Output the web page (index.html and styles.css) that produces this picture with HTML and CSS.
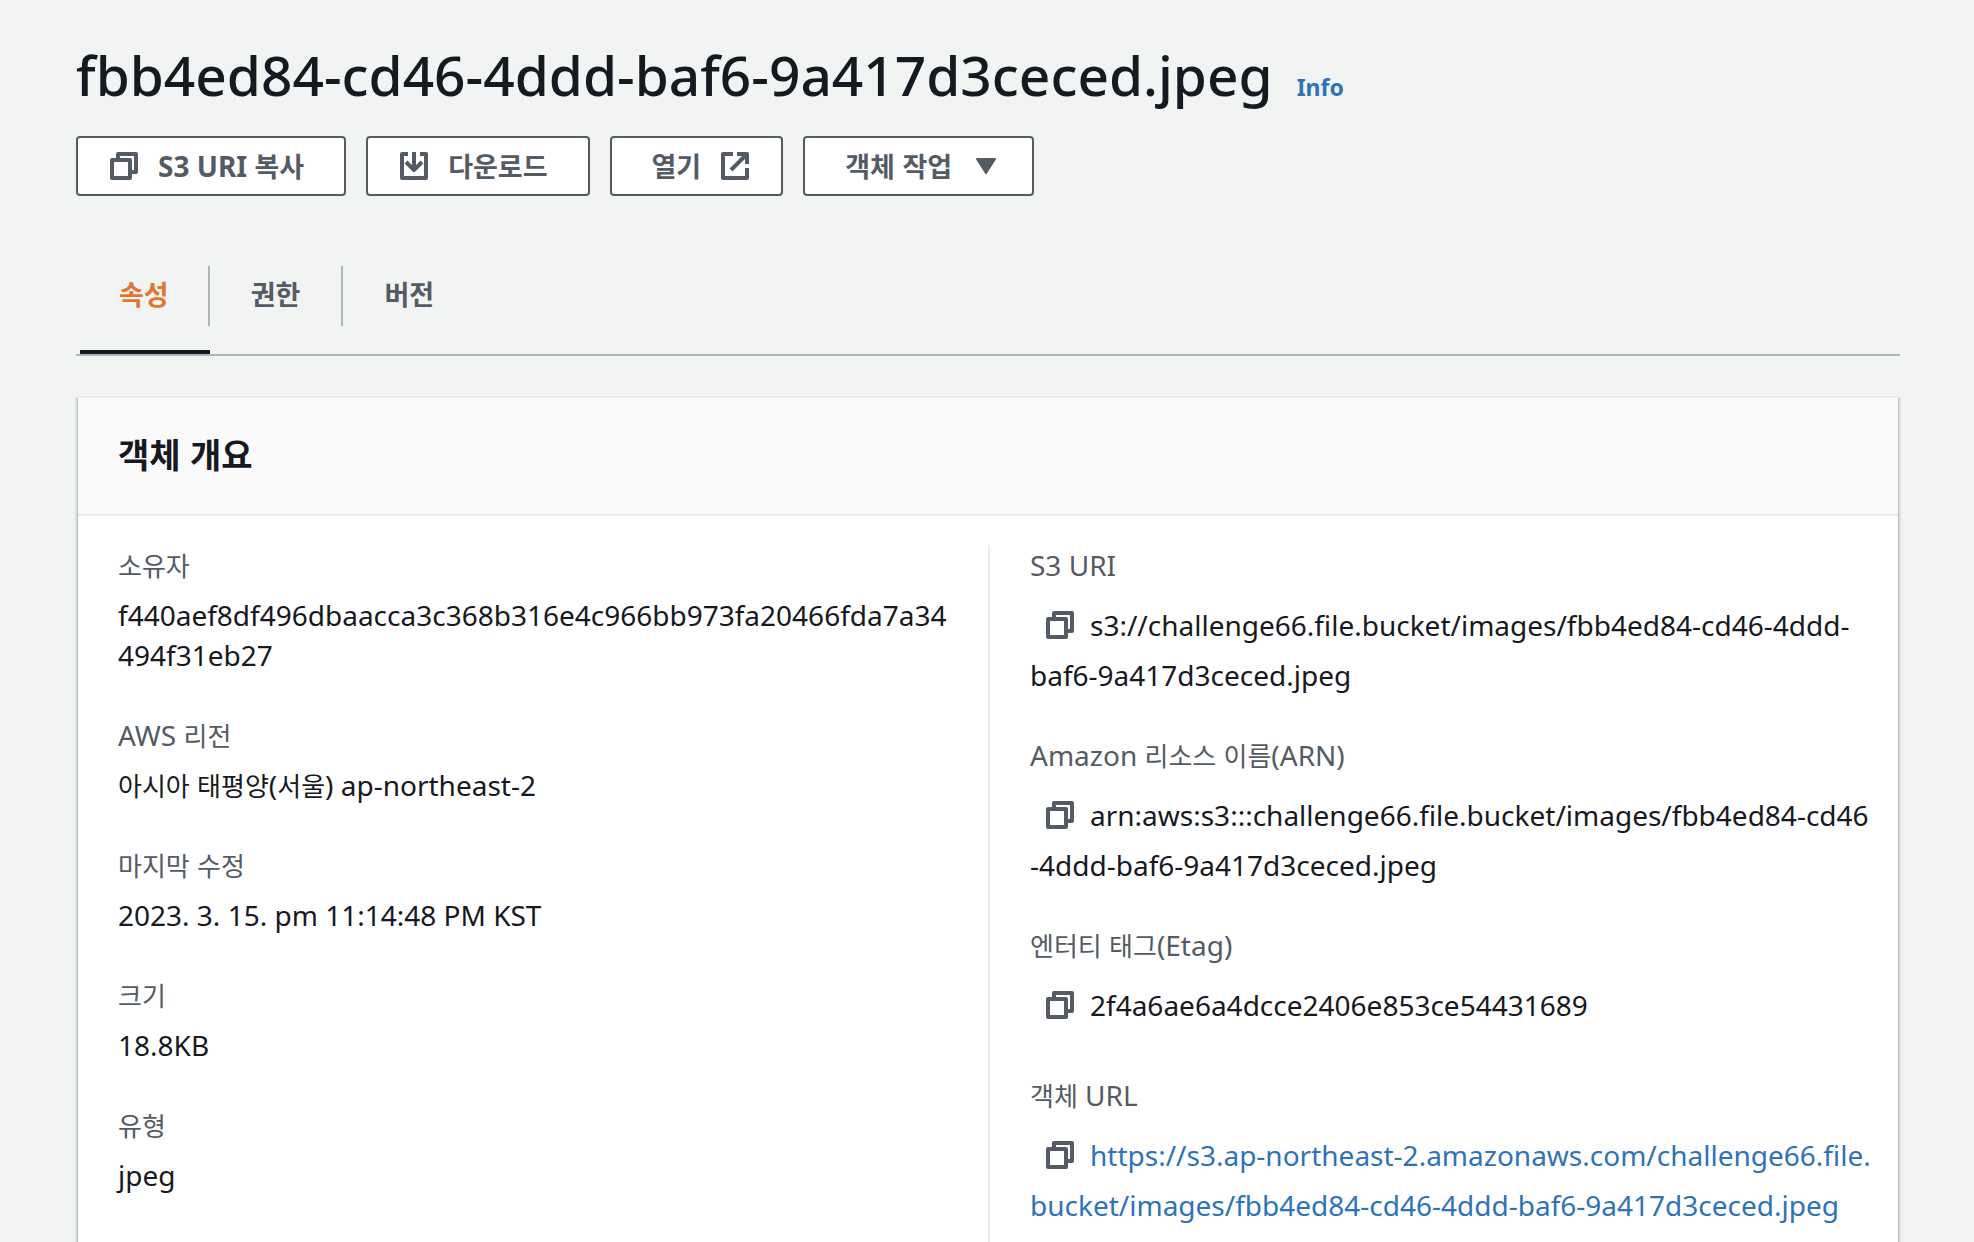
FILE: index.html
```html
<!DOCTYPE html>
<html lang="ko">
<head>
<meta charset="utf-8">
<meta name="viewport" content="width=device-width, initial-scale=1">
<title>fbb4ed84-cd46-4ddd-baf6-9a417d3ceced.jpeg</title>
<link rel="stylesheet" href="styles.css">
</head>
<body>
<svg class="sprite" aria-hidden="true">
  <symbol id="copy" viewBox="0 0 28 28">
    <path d="M2 8h18v18H2z M8 6V2h18v18h-4" fill="none" stroke="currentColor" stroke-width="4" stroke-linejoin="round"/>
  </symbol>
</svg>
<main class="page">
  <header class="title">
    <h1>fbb4ed84-cd46-4ddd-baf6-9a417d3ceced.jpeg</h1>
    <a class="info" href="#info">Info</a>
  </header>

  <div class="actions">
    <button class="btn" type="button"><svg class="icon"><use href="#copy"/></svg><span>S3 URI <span class="ko">복사</span></span></button>
    <button class="btn" type="button"><svg class="icon" viewBox="0 0 28 28"><path d="M8 2H2v24h24V2h-6 M14 0v17 M6 10l8 8 8-8" fill="none" stroke="currentColor" stroke-width="4" stroke-linejoin="round"/></svg><span><span class="ko">다운로드</span></span></button>
    <button class="btn btn-end" type="button"><span><span class="ko">열기</span></span><svg class="icon" viewBox="0 0 28 28"><path d="M12 2H2v24h24V16 M16 2h10v10 M26 2L10 18" fill="none" stroke="currentColor" stroke-width="4" stroke-linejoin="round"/></svg></button>
    <button class="btn btn-end" type="button"><span><span class="ko">객체 작업</span></span><svg class="icon" viewBox="0 0 28 28"><path d="M5 7h18l-9 14z" fill="currentColor" stroke="currentColor" stroke-width="2" stroke-linejoin="round"/></svg></button>
  </div>

  <nav class="tabs">
    <a class="tab active" href="#properties" aria-current="page"><span>속성</span></a>
    <a class="tab" href="#permissions"><span>권한</span></a>
    <a class="tab" href="#versions"><span>버전</span></a>
  </nav>

  <section class="card">
    <h2>객체 개요</h2>
    <div class="columns">
      <dl class="column">
        <div><dt class="ko">소유자</dt><dd>f440aef8df496dbaacca3c368b316e4c966bb973fa20466fda7a34<br>494f31eb27</dd></div>
        <div><dt>AWS <span class="ko">리전</span></dt><dd><span class="ko">아시아 태평양</span>(<span class="ko">서울</span>) ap-northeast-2</dd></div>
        <div><dt class="ko">마지막 수정</dt><dd>2023. 3. 15. pm 11:14:48 PM KST</dd></div>
        <div><dt class="ko">크기</dt><dd>18.8KB</dd></div>
        <div><dt class="ko">유형</dt><dd>jpeg</dd></div>
      </dl>
      <dl class="column">
        <div><dt>S3 URI</dt><dd><button class="copy" type="button" aria-label="S3 URI 복사"><svg class="icon"><use href="#copy"/></svg></button>s3://challenge66.file.bucket/images/fbb4ed84-cd46-4ddd-<br>baf6-9a417d3ceced.jpeg</dd></div>
        <div><dt>Amazon <span class="ko">리소스 이름</span>(ARN)</dt><dd><button class="copy" type="button" aria-label="ARN 복사"><svg class="icon"><use href="#copy"/></svg></button>arn:aws:s3:::challenge66.file.bucket/images/fbb4ed84-cd46<br>-4ddd-baf6-9a417d3ceced.jpeg</dd></div>
        <div><dt><span class="ko">엔터티 태그</span>(Etag)</dt><dd><button class="copy" type="button" aria-label="Etag 복사"><svg class="icon"><use href="#copy"/></svg></button>2f4a6ae6a4dcce2406e853ce54431689</dd></div>
        <div><dt><span class="ko">객체</span> URL</dt><dd><button class="copy" type="button" aria-label="URL 복사"><svg class="icon"><use href="#copy"/></svg></button><a href="#object">https://s3.ap-northeast-2.amazonaws.com/challenge66.file.<br>bucket/images/fbb4ed84-cd46-4ddd-baf6-9a417d3ceced.jpeg</a></dd></div>
      </dl>
    </div>
  </section>
</main>
</body>
</html>
```
FILE: styles.css
```css
* { box-sizing: border-box; }
body {
  margin: 0;
  background: #f2f3f3;
  color: #16191f;
  font-family: "Noto Sans", "Noto Sans CJK KR", sans-serif;
  font-size: 28px;
  line-height: 40px;
}
h1, h2, dl, dd { margin: 0; }
a { color: #2e73b8; text-decoration: none; }
.sprite { display: none; }
.page { padding: 38px 74px 0 76px; }

.title { display: flex; align-items: baseline; gap: 24px; }
h1 { font-size: 55px; line-height: 74px; font-weight: 500; }
.info { font-size: 23px; font-weight: 700; }

.ko { font-family: "Noto Sans CJK KR", sans-serif; font-size: 26px; }
span.ko { line-height: 1; }

.actions { display: flex; gap: 20px; margin-top: 24px; }
.btn {
  display: flex;
  align-items: center;
  gap: 20px;
  height: 60px;
  padding: 0 40px 0 32px;
  border: 2px solid #545b64;
  border-radius: 4px;
  background: #fff;
  color: #545b64;
  font: 700 28px/40px "Noto Sans", "Noto Sans CJK KR", sans-serif;
}
.btn-end { padding: 0 32px 0 40px; }
.btn .ko { font-size: 27px; }
.icon { display: block; flex: none; width: 28px; height: 28px; }

.tabs {
  display: flex;
  margin-top: 70px;
  padding-left: 4px;
  border-bottom: 2px solid #aab7b8;
}
.tab {
  padding-bottom: 24px;
  border-bottom: 4px solid transparent;
  color: #545b64;
  font: 700 27px/56px "Noto Sans CJK KR", sans-serif;
}
.tab span { display: block; padding: 0 41px 4px; border-right: 2px solid #aab7b8; }
.tab:first-child span { padding: 0 39px 4px; }
.tab:last-child span { border-right: 0; }
.tab.active { border-color: #16191f; color: #e07632; }

.card {
  margin: 40px 2px 0;
  border-top: 2px solid #eaeded;
  background: #fff;
  box-shadow: 0 2px 2px rgba(0, 28, 36, .3), 2px 2px 2px rgba(0, 28, 36, .15), -2px 2px 2px rgba(0, 28, 36, .15);
}
h2 {
  padding: 32px 40px 36px;
  border-bottom: 2px solid #eaeded;
  background: #fafafa;
  font: 700 34px/48px "Noto Sans CJK KR", sans-serif;
}
.columns { display: grid; grid-template-columns: minmax(0, 1fr) minmax(0, 1fr); padding-top: 29px; }
.column { display: flex; flex-direction: column; gap: 40px; padding: 0 12px 40px 40px; }
.column + .column { border-left: 2px solid #eaeded; }
dt { margin-bottom: 10px; color: #545b64; }
dd { overflow-wrap: anywhere; }
.copy {
  display: inline-flex;
  align-items: center;
  justify-content: center;
  width: 60px;
  height: 60px;
  padding: 0;
  border: 0;
  background: none;
  color: #545b64;
  vertical-align: -3px;
}
```
